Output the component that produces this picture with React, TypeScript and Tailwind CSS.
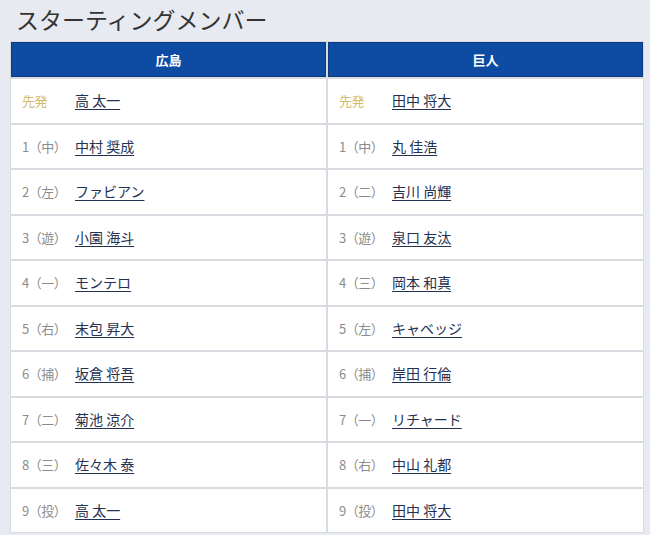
import React from "react";

const left: [string, string][] = [
  ["先発", "高 太一"],
  ["1（中）", "中村 奨成"],
  ["2（左）", "ファビアン"],
  ["3（遊）", "小園 海斗"],
  ["4（一）", "モンテロ"],
  ["5（右）", "末包 昇大"],
  ["6（捕）", "坂倉 将吾"],
  ["7（二）", "菊池 涼介"],
  ["8（三）", "佐々木 泰"],
  ["9（投）", "高 太一"],
];
const right: [string, string][] = [
  ["先発", "田中 将大"],
  ["1（中）", "丸 佳浩"],
  ["2（二）", "吉川 尚輝"],
  ["3（遊）", "泉口 友汰"],
  ["4（三）", "岡本 和真"],
  ["5（左）", "キャベッジ"],
  ["6（捕）", "岸田 行倫"],
  ["7（一）", "リチャード"],
  ["8（右）", "中山 礼都"],
  ["9（投）", "田中 将大"],
];

function Column({ team, rows }: { team: string; rows: [string, string][] }) {
  return (
    <div className="flex flex-col gap-[2px]">
      <div className="h-[35px] bg-[#0e4ba3] border border-[#0a3a80] flex items-center justify-center text-white font-bold text-[13px]">
        {team}
      </div>
      {rows.map(([label, name], i) => (
        <div key={i} className="h-[43.5px] bg-white flex items-center pl-[11px]">
          <span
            className={
              "w-[53px] text-[13px] tracking-[-0.5px] " +
              (i === 0 ? "text-[#d2bb6e]" : "text-[#8c8c8c]")
            }
          >
            {label}
          </span>
          <span className="text-[14px] text-[#243150] underline underline-offset-[3px] decoration-[1px]">
            {name}
          </span>
        </div>
      ))}
    </div>
  );
}

export default function App() {
  return (
    <div
      className="w-[650px] h-[535px] bg-[#e7eaf0] overflow-hidden"
      style={{ fontFamily: '"Noto Sans CJK JP", "Noto Sans", sans-serif' }}
    >
      <div className="h-[41px] pl-[16px] pt-[1px] text-[23px] leading-[36px] text-[#333]">
        スターティングメンバー
      </div>
      <div className="ml-[10px] w-[634px] bg-[#d8dbe0] p-[1px] grid grid-cols-2 gap-[2px]">
        <Column team="広島" rows={left} />
        <Column team="巨人" rows={right} />
      </div>
    </div>
  );
}
